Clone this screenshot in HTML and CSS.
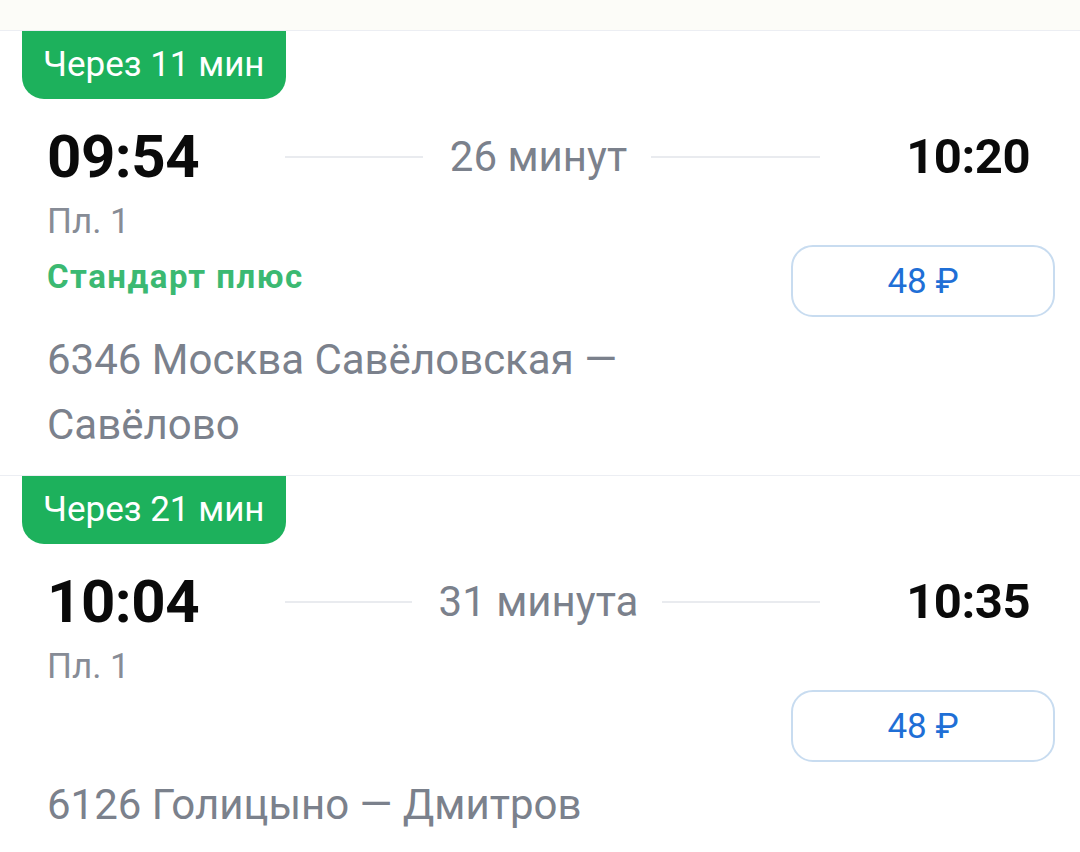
FILE: index.html
```html
<!DOCTYPE html>
<html lang="ru">
<head>
<meta charset="utf-8">
<link rel="stylesheet" href="styles.css">
</head>
<body>
<div class="page">
  <div class="topband"></div>

  <section class="card">
    <div class="badge">Через 11 мин</div>
    <div class="times">
      <div class="side side-start">
        <span class="time">09:54</span>
        <span class="line"></span>
      </div>
      <span class="duration">26 минут</span>
      <div class="side side-end">
        <span class="line"></span>
        <span class="time time-end">10:20</span>
      </div>
    </div>
    <div class="body">
      <div class="info">
        <div class="platform">Пл. 1</div>
        <div class="tariff">Стандарт плюс</div>
      </div>
      <button class="price">48 ₽</button>
    </div>
    <div class="route">6346 Москва Савёловская — Савёлово</div>
  </section>

  <section class="card">
    <div class="badge">Через 21 мин</div>
    <div class="times">
      <div class="side side-start">
        <span class="time">10:04</span>
        <span class="line"></span>
      </div>
      <span class="duration">31 минута</span>
      <div class="side side-end">
        <span class="line"></span>
        <span class="time time-end">10:35</span>
      </div>
    </div>
    <div class="body">
      <div class="info">
        <div class="platform">Пл. 1</div>
        <div class="tariff"></div>
      </div>
      <button class="price">48 ₽</button>
    </div>
    <div class="route">6126 Голицыно — Дмитров</div>
  </section>
</div>
</body>
</html>
```

FILE: styles.css
```css
* { box-sizing: border-box; }
html, body {
  margin: 0;
  padding: 0;
  background: #ffffff;
}
body {
  font-family: Roboto, "Noto Sans", "Liberation Sans", sans-serif;
  width: 1080px;
  height: 852px;
  overflow: hidden;
}
.topband {
  height: 30px;
  background: #fcfcf8;
}
.card {
  border-top: 1px solid #eceef3;
  padding: 0 50px 18px 47px;
}
.badge {
  display: inline-block;
  margin-left: -25px;
  height: 68px;
  padding: 0 21px 0 21px;
  background: #1db15c;
  color: #ffffff;
  font-size: 35px;
  line-height: 67px;
  border-radius: 0 0 22px 22px;
}
.times {
  display: grid;
  grid-template-columns: 1fr auto 1fr;
  align-items: center;
  margin-top: 22px;
  height: 70px;
}
.side {
  display: flex;
  align-items: center;
}
.side-start {
  padding-right: 27px;
}
.side-end {
  padding-left: 24px;
}
.time {
  font-weight: 700;
  font-size: 60px;
  color: #0a0a0a;
  width: 238px;
  letter-spacing: -0.5px;
}
.time-end {
  width: 210px;
  font-size: 49px;
  text-align: right;
}
.line {
  flex: 1;
  height: 2px;
  background: #e9ebef;
}
.duration {
  font-size: 42px;
  color: #7b818c;
}
.body {
  display: flex;
  justify-content: space-between;
  align-items: flex-start;
  margin-top: 9px;
}
.platform {
  font-size: 35px;
  line-height: 44px;
  height: 44px;
  color: #878c96;
}
.tariff {
  margin-top: 11px;
  font-size: 33px;
  font-weight: 700;
  letter-spacing: 1.5px;
  line-height: 44px;
  height: 44px;
  color: #3bb972;
}
.price {
  margin-top: 45px;
  margin-right: -25px;
  width: 264px;
  height: 72px;
  border: 2px solid #c8dcf0;
  border-radius: 22px;
  background: #ffffff;
  color: #1f6fd6;
  font-family: Roboto, "Noto Sans", "Liberation Sans", sans-serif;
  font-size: 35px;
  padding: 0;
}
.route {
  margin-top: 10px;
  max-width: 600px;
  font-size: 42px;
  line-height: 65px;
  color: #7b818c;
}
```
